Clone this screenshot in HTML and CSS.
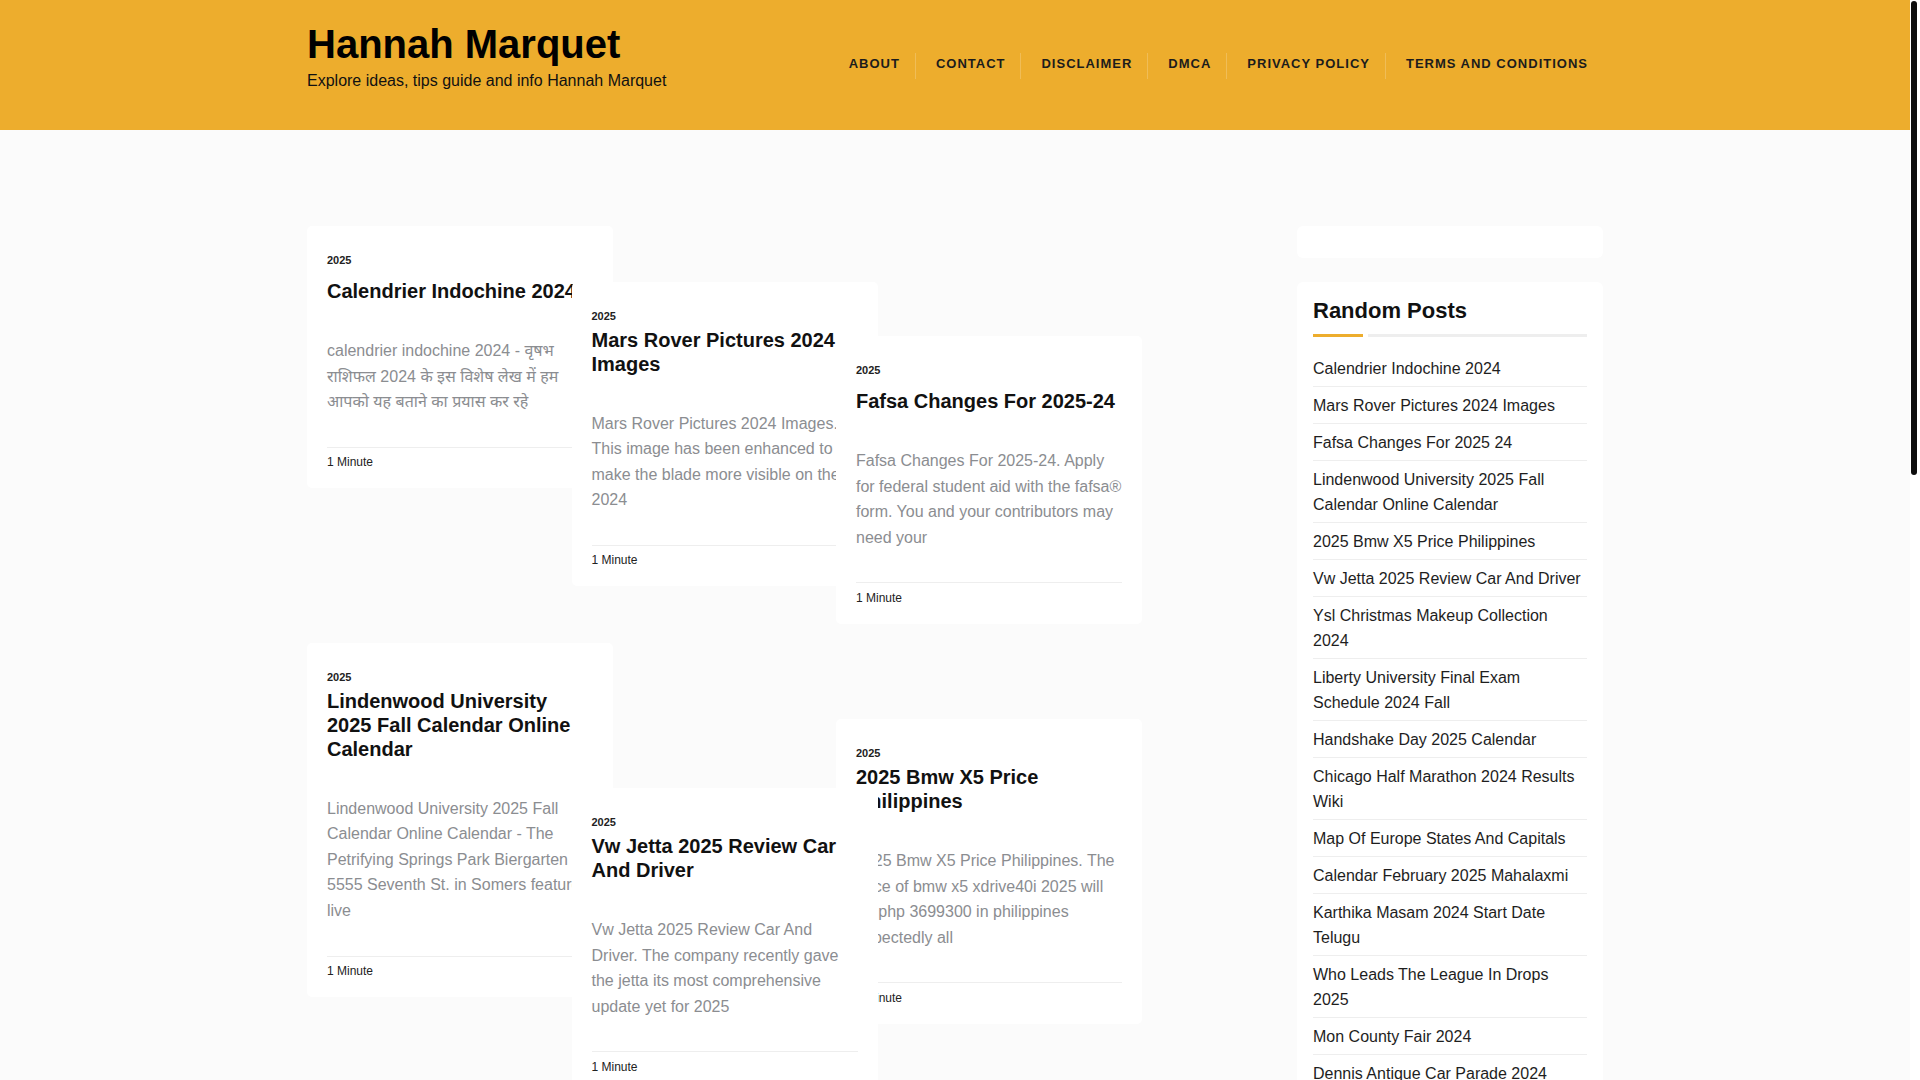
FILE: index.html
```html
<!DOCTYPE html>
<html lang="en">
<head>
<meta charset="utf-8">
<title>Hannah Marquet</title>
<link rel="stylesheet" href="styles.css">
</head>
<body>
<header class="site-header">
  <div class="container header-inner">
    <div class="branding">
      <h1 class="site-title"><a href="#">Hannah Marquet</a></h1>
      <p class="site-desc">Explore ideas, tips guide and info Hannah Marquet</p>
    </div>
    <nav class="main-nav">
      <ul>
        <li><a href="#">About</a></li>
        <li><a href="#">Contact</a></li>
        <li><a href="#">Disclaimer</a></li>
        <li><a href="#">DMCA</a></li>
        <li><a href="#">Privacy Policy</a></li>
        <li><a href="#">Terms and Conditions</a></li>
      </ul>
    </nav>
  </div>
</header>

<div class="container content">
  <main class="posts">
    <article class="card">
      <div class="card-cat">2025</div>
      <h2 class="card-title single">Calendrier Indochine 2024</h2>
      <p class="card-excerpt">calendrier indochine 2024 - वृषभ राशिफल 2024 के इस विशेष लेख में हम आपको यह बताने का प्रयास कर रहे</p>
      <div class="card-meta">1 Minute</div>
    </article>
    <article class="card card-r1c2">
      <div class="card-cat">2025</div>
      <h2 class="card-title">Mars Rover Pictures 2024 Images</h2>
      <p class="card-excerpt">Mars Rover Pictures 2024 Images. This image has been enhanced to make the blade more visible on the 2024</p>
      <div class="card-meta">1 Minute</div>
    </article>
    <article class="card card-r1c3">
      <div class="card-cat">2025</div>
      <h2 class="card-title single">Fafsa Changes For 2025-24</h2>
      <p class="card-excerpt">Fafsa Changes For 2025-24. Apply for federal student aid with the fafsa® form. You and your contributors may need your</p>
      <div class="card-meta">1 Minute</div>
    </article>
    <article class="card card-r2c1">
      <div class="card-cat">2025</div>
      <h2 class="card-title">Lindenwood University 2025 Fall Calendar Online Calendar</h2>
      <p class="card-excerpt">Lindenwood University 2025 Fall Calendar Online Calendar - The Petrifying Springs Park Biergarten 5555 Seventh St. in Somers features live</p>
      <div class="card-meta">1 Minute</div>
    </article>
    <article class="card card-r2c3">
      <div class="card-cat">2025</div>
      <h2 class="card-title">2025 Bmw X5 Price Philippines</h2>
      <p class="card-excerpt">2025 Bmw X5 Price Philippines. The price of bmw x5 xdrive40i 2025 will be php 3699300 in philippines expectedly all</p>
      <div class="card-meta">1 Minute</div>
    </article>
    <article class="card card-r2c2">
      <div class="card-cat">2025</div>
      <h2 class="card-title">Vw Jetta 2025 Review Car And Driver</h2>
      <p class="card-excerpt">Vw Jetta 2025 Review Car And Driver. The company recently gave the jetta its most comprehensive update yet for 2025</p>
      <div class="card-meta">1 Minute</div>
    </article>
  </main>

  <aside class="sidebar">
    <section class="widget widget-empty"></section>
    <section class="widget">
      <h2 class="widget-title">Random Posts</h2>
      <div class="widget-rule"><span class="rule-accent"></span><span class="rule-line"></span></div>
      <ul class="post-list">
        <li><a href="#">Calendrier Indochine 2024</a></li>
        <li><a href="#">Mars Rover Pictures 2024 Images</a></li>
        <li><a href="#">Fafsa Changes For 2025 24</a></li>
        <li><a href="#">Lindenwood University 2025 Fall Calendar Online Calendar</a></li>
        <li><a href="#">2025 Bmw X5 Price Philippines</a></li>
        <li><a href="#">Vw Jetta 2025 Review Car And Driver</a></li>
        <li><a href="#">Ysl Christmas Makeup Collection 2024</a></li>
        <li><a href="#">Liberty University Final Exam Schedule 2024 Fall</a></li>
        <li><a href="#">Handshake Day 2025 Calendar</a></li>
        <li><a href="#">Chicago Half Marathon 2024 Results Wiki</a></li>
        <li><a href="#">Map Of Europe States And Capitals</a></li>
        <li><a href="#">Calendar February 2025 Mahalaxmi</a></li>
        <li><a href="#">Karthika Masam 2024 Start Date Telugu</a></li>
        <li><a href="#">Who Leads The League In Drops 2025</a></li>
        <li><a href="#">Mon County Fair 2024</a></li>
        <li><a href="#">Dennis Antique Car Parade 2024</a></li>
      </ul>
    </section>
  </aside>
</div>

<div class="scrollbar" aria-hidden="true"><div class="scrollbar-thumb"></div></div>
</body>
</html>
```
FILE: styles.css
```css
html {
  background: #fbfbfb;
}
body {
  margin: 0 10px 0 0;
  background: #fbfbfb;
  font-family: "Liberation Sans", Arial, "Noto Sans", sans-serif;
  color: #222;
}
a {
  color: inherit;
  text-decoration: none;
}
.container {
  width: 1296px;
  margin: 0 auto;
}

/* scrollbar overlay */
.scrollbar {
  position: fixed;
  top: 0;
  right: 0;
  width: 10px;
  height: 100vh;
  background: #fff;
}
.scrollbar-thumb {
  margin: 1px 3px 0 1px;
  height: 474px;
  background: #0d0d0d;
  border-radius: 3px;
}

/* header */
.site-header {
  background: #edad2d;
  height: 130px;
}
.header-inner {
  display: flex;
  justify-content: space-between;
  align-items: flex-start;
  padding-top: 20px;
}
.site-title {
  margin: 0;
  font-size: 40px;
  line-height: 48px;
  font-weight: 700;
  color: #000;
}
.site-desc {
  margin: 0;
  padding-top: 1px;
  font-size: 16px;
  line-height: 24px;
  color: #111;
}
.main-nav ul {
  display: flex;
  margin: 33px 0 0;
  padding: 0;
  list-style: none;
}
.main-nav li + li {
  border-left: 1px solid rgba(255, 255, 255, 0.2);
}
.main-nav a {
  display: block;
  padding: 0 15px 4px 20px;
  line-height: 22px;
  font-size: 13px;
  font-weight: 700;
  letter-spacing: 1px;
  text-transform: uppercase;
  color: #1c1c1c;
}

/* content */
.content {
  display: flex;
  justify-content: space-between;
  align-items: flex-start;
  padding-top: 96px;
}
.posts {
  display: grid;
  grid-template-columns: repeat(3, 264.5px);
  row-gap: 19px;
  align-items: start;
}
.card {
  width: 306px;
  box-sizing: border-box;
  background: #fff;
  border-radius: 5px;
  padding: 26px 20px 0;
}
.card-r1c2 {
  margin-top: 55.5px;
}
.card-r1c3 {
  margin-top: 110px;
}
.card-r2c1 {
  grid-column: 1;
  grid-row: 2;
}
.card-r2c3 {
  grid-column: 3;
  grid-row: 2;
  margin-top: 76.5px;
}
.card-r2c2 {
  grid-column: 2;
  grid-row: 2;
  margin-top: 145.5px;
}
.card-cat {
  font-size: 11px;
  line-height: 16px;
  font-weight: 700;
  color: #222;
  margin-bottom: 4px;
}
.card-title {
  margin: 0;
  font-size: 20px;
  line-height: 24px;
  font-weight: 700;
  color: #111;
}
.card-title.single {
  padding-top: 7px;
}
.card-excerpt {
  margin: 35px 0 0;
  font-size: 16px;
  line-height: 25.6px;
  color: #8b8d91;
}
.card-meta {
  margin-top: 32px;
  border-top: 1px solid #eeeeee;
  padding: 5.5px 0 16.7px;
  font-size: 12px;
  line-height: 18px;
  color: #222;
}

/* sidebar */
.sidebar {
  width: 306px;
}
.widget {
  background: #fff;
  border-radius: 6px;
  padding: 16px;
}
.widget-empty {
  height: 32px;
  padding: 0;
  margin-bottom: 24px;
}
.widget-title {
  margin: 0;
  font-size: 22px;
  line-height: 26px;
  font-weight: 700;
  color: #111;
}
.widget-rule {
  display: flex;
  gap: 5px;
  height: 3px;
  margin-top: 10px;
}
.rule-accent {
  width: 50px;
  background: #edad2d;
}
.rule-line {
  flex: 1;
  background: #eeeeee;
}
.post-list {
  margin: 13px 0 0;
  padding: 0;
  list-style: none;
}
.post-list li {
  padding: 5.5px 0;
  font-size: 16px;
  line-height: 25px;
  border-bottom: 1px solid #eeeeee;
  color: #1e1e1e;
}
```
